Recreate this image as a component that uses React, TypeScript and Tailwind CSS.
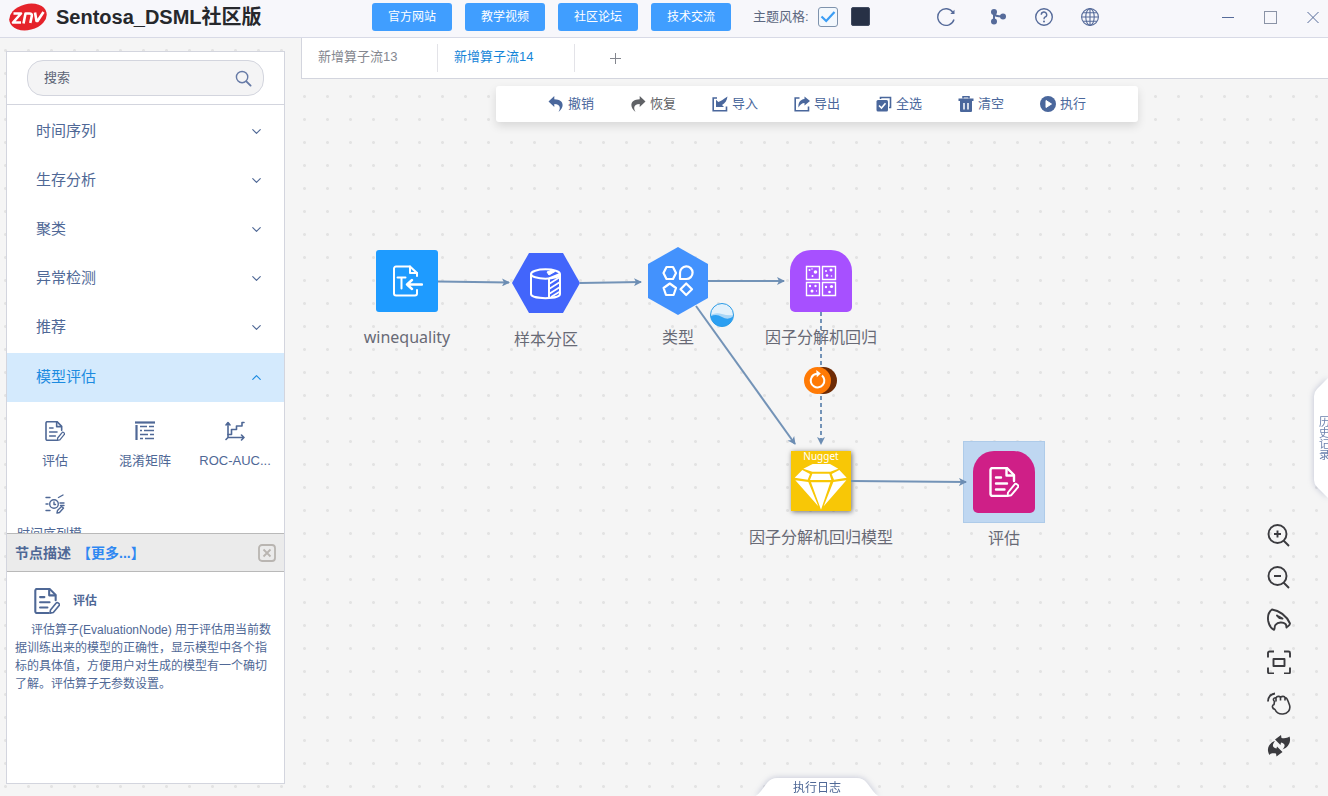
import React, { useState } from "react";
import { ChevronDown, ChevronUp } from "lucide-react";

type IconProps = { className?: string };

const EvaluateIcon = ({ className }: IconProps) => (
  <svg viewBox="0 0 30 30" fill="none" stroke="currentColor" strokeWidth="2.400" strokeLinecap="round" strokeLinejoin="round" className={className} aria-hidden="true">
    <path d="M17 29H3.500A2 2 0 0 1 1.500 27V3A2 2 0 0 1 3.500 1H18L25 8V14" />
    <path d="M17.500 1.500V8.500H24.500" />
    <path d="M7 10.500H12M7 16.500H18M7 22.500H15.500" />
    <path d="M19 25.500L25.600 17.400A1.500 1.500 0 0 1 27.800 17.200L28.800 18A1.500 1.500 0 0 1 29 20.200L22.300 28.200L18.500 29Z" strokeWidth="1.900" />
  </svg>
);

const MatrixIcon = ({ className }: IconProps) => (
  <svg viewBox="0 0 20 20" fill="none" stroke="currentColor" strokeWidth="1.4" className={className} aria-hidden="true">
    <path d="M0 1.500H20" strokeWidth="2.200" />
    <path d="M1.500 4V19" strokeWidth="2.200" />
    <path d="M5 5.500H12M14 5.500H19M5 9.500H7M9 9.500H19M5 13.500H13M15 13.500H19M5 17.500H8M10 17.500H19" />
  </svg>
);

const RocIcon = ({ className }: IconProps) => (
  <svg viewBox="0 0 20 20" fill="none" stroke="currentColor" strokeWidth="1.600" strokeLinecap="round" strokeLinejoin="round" className={className} aria-hidden="true">
    <path d="M3 2V16.500H19M1 4L3 1.500L5 4M16.500 14L19 16.500L16.500 19M3 16.500L1 18.500" />
    <path d="M3 13.500H6.500V8.500H11.500V5H17V1.500H19" />
  </svg>
);

const TimeSeriesIcon = ({ className }: IconProps) => (
  <svg viewBox="0 0 20 20" fill="none" stroke="currentColor" strokeWidth="1.400" strokeLinecap="round" strokeLinejoin="round" className={className} aria-hidden="true">
    <circle cx="9" cy="10" r="4.300" />
    <path d="M9 8V10.500H10.500M1 3.500H5M13.500 3.500L18 1M1 10H3M15 9H19M15.500 11.500H19M1 16.500H5" />
    <path d="M12.500 16.500L16.500 12.500L18.500 14L14.500 18.500L12 19Z" />
  </svg>
);

const SearchIcon = ({ className }: IconProps) => (
  <svg viewBox="0 0 18 18" fill="none" stroke="currentColor" strokeWidth="1.500" strokeLinecap="round" className={className} aria-hidden="true">
    <circle cx="7.500" cy="7.500" r="6" />
    <path d="M12 12L16.500 16.500" strokeWidth="2" />
  </svg>
);

const UndoIcon = ({ className }: IconProps) => (
  <svg viewBox="0 0 16 16" fill="currentColor" className={className} aria-hidden="true">
    <path d="M6.300 0L0.500 5.600L6.300 11V8C11 8 13.500 10.500 10.500 16C17 11 16 3.300 6.300 3.200Z" />
  </svg>
);

const RedoIcon = ({ className }: IconProps) => (
  <svg viewBox="0 0 16 16" fill="currentColor" className={className} aria-hidden="true">
    <path d="M9.700 0L15.500 5.600L9.700 11V8C5 8 2.500 10.500 5.500 16C-1 11 0 3.300 9.700 3.200Z" />
  </svg>
);

const ImportIcon = ({ className }: IconProps) => (
  <svg viewBox="0 0 16 16" className={className} aria-hidden="true">
    <path d="M5 2H1.200V14.800H14.500V10.500" fill="none" stroke="currentColor" strokeWidth="1.600" />
    <path d="M4 11V3.800L6.300 6C8.500 5.500 11 3.500 15.500 0.500C15 4.500 13 7.500 10 9L12 11Z" fill="currentColor" />
  </svg>
);

const ExportIcon = ({ className }: IconProps) => (
  <svg viewBox="0 0 16 16" className={className} aria-hidden="true">
    <path d="M5.500 2H1.200V14.800H14.500V10.500" fill="none" stroke="currentColor" strokeWidth="1.600" />
    <path d="M10.500 0.500L16 5L10.500 9.500V7C8 7 6 8.500 4.500 11.500C4 7 6 3.500 10.500 3Z" fill="currentColor" />
  </svg>
);

const SelectAllIcon = ({ className }: IconProps) => (
  <svg viewBox="0 0 16 16" className={className} aria-hidden="true">
    <path d="M4.500 3V1.500H14.500V11.500H13" fill="none" stroke="currentColor" strokeWidth="1.600" />
    <rect x="0.500" y="4" width="11.500" height="11.500" rx="1.500" fill="currentColor" />
    <path d="M3 9.500L5.500 12L9.500 7.300" fill="none" stroke="white" strokeWidth="1.600" />
  </svg>
);

const TrashIcon = ({ className }: IconProps) => (
  <svg viewBox="0 0 16 16" className={className} aria-hidden="true">
    <path d="M5 2.500V0.800H11V2.500" fill="none" stroke="currentColor" strokeWidth="1.500" />
    <path d="M0.500 2.500H15.500V5H0.500ZM2 5H14V14.500A1.300 1.300 0 0 1 12.700 16H3.300A1.300 1.300 0 0 1 2 14.500Z" fill="currentColor" />
    <path d="M6 7V13.500M10 7V13.500" stroke="white" strokeWidth="1.500" />
  </svg>
);

const RunIcon = ({ className }: IconProps) => (
  <svg viewBox="0 0 16 16" className={className} aria-hidden="true">
    <circle cx="8" cy="8" r="8" fill="currentColor" />
    <path d="M6 4.500L11.500 8L6 11.500Z" fill="white" stroke="white" strokeLinejoin="round" />
  </svg>
);

const RefreshIcon = ({ className }: IconProps) => (
  <svg viewBox="0 0 20 20" fill="none" stroke="currentColor" strokeWidth="1.400" className={className} aria-hidden="true">
    <path d="M18 12.500A8.300 8.300 0 1 1 17 5.500" />
    <path d="M18.500 2.800V7H14.300Z" fill="currentColor" stroke="none" />
  </svg>
);

const BranchIcon = ({ className }: IconProps) => (
  <svg viewBox="0 0 20 20" className={className} aria-hidden="true">
    <path d="M6 5V14.500M6 5C6 9 9 9.500 15 9.500" fill="none" stroke="currentColor" strokeWidth="2" />
    <g fill="currentColor">
      <circle cx="6" cy="5" r="3" />
      <circle cx="6" cy="14.500" r="3" />
      <circle cx="15" cy="9.500" r="3" />
    </g>
  </svg>
);

const HelpIcon = ({ className }: IconProps) => (
  <svg viewBox="0 0 20 20" fill="none" stroke="currentColor" strokeWidth="1.400" className={className} aria-hidden="true">
    <circle cx="10" cy="10" r="8.300" />
    <path d="M7.300 7.800A2.700 2.700 0 1 1 10.900 10.200Q10 10.700 10 12.200" />
    <circle cx="10" cy="14.500" r="1" fill="currentColor" stroke="none" />
  </svg>
);

const GlobeIcon = ({ className }: IconProps) => (
  <svg viewBox="0 0 20 20" fill="none" stroke="currentColor" strokeWidth="1.100" className={className} aria-hidden="true">
    <circle cx="10" cy="10" r="8.400" />
    <ellipse cx="10" cy="10" rx="4.200" ry="8.400" />
    <path d="M10 1.600V18.400M1.600 10H18.400M3 5.800H17M3 14.200H17" />
  </svg>
);

const headerLinks = ["官方网站", "教学视频", "社区论坛", "技术交流"];
const categories = ["时间序列", "生存分析", "聚类", "异常检测", "推荐", "模型评估"];

const operators = [
  { label: "评估", Icon: EvaluateIcon },
  { label: "混淆矩阵", Icon: MatrixIcon },
  { label: "ROC-AUC...", Icon: RocIcon },
  { label: "时间序列模...", Icon: TimeSeriesIcon },
];

const tools = [
  { label: "撤销", Icon: UndoIcon, tone: "text-[#4a679c]" },
  { label: "恢复", Icon: RedoIcon, tone: "text-[#606266]" },
  { label: "导入", Icon: ImportIcon, tone: "text-[#4a679c]" },
  { label: "导出", Icon: ExportIcon, tone: "text-[#4a679c]" },
  { label: "全选", Icon: SelectAllIcon, tone: "text-[#4a679c]" },
  { label: "清空", Icon: TrashIcon, tone: "text-[#4a679c]" },
  { label: "执行", Icon: RunIcon, tone: "text-[#4a679c]" },
];

function Header() {
  const [light, setLight] = useState(true);
  return (
    <header className="flex h-[38px] shrink-0 items-center border-b border-[#d8dae6] bg-[#f7f7fb] pb-1 text-[#566b9a]">
      <div className="flex w-[372px] shrink-0 items-center gap-[9px] pl-[9px]">
        <svg viewBox="0 0 38 30" className="h-[30px] w-[38px]" role="img" aria-label="znv">
          <ellipse cx="19" cy="15" rx="19" ry="13" transform="rotate(-14 19 15)" fill="#e5232b" />
          <g fill="none" stroke="white" strokeWidth="2.600" strokeLinejoin="round">
            <path d="M4.500 11.500H12L4 20.500H12" />
            <path d="M14.500 21.500L16.500 11.500H20.500Q23.300 11.500 22.800 14L21.300 21" />
            <path d="M26 10.500L27.500 19H28.500L34.500 10" />
          </g>
        </svg>
        <h1 className="text-xl font-bold whitespace-nowrap text-[#26282c]">Sentosa_DSML社区版</h1>
      </div>
      <nav className="flex shrink-0 gap-[13px]">
        {headerLinks.map((label) => (
          <a key={label} href="#" className="flex h-7 w-20 items-center justify-center rounded-[3px] bg-[#409eff] text-xs text-white">
            {label}
          </a>
        ))}
      </nav>
      <div className="ml-[22px] flex shrink-0 items-center text-[13px]">
        <label htmlFor="theme-light" className="text-[#5d6880]">主题风格:</label>
        <span className="relative ml-[9px] flex">
          <input
            id="theme-light"
            type="checkbox"
            checked={light}
            onChange={(e) => setLight(e.target.checked)}
            className="size-5 appearance-none rounded-[3px] border border-[#7f93ad] bg-[#f3f8fd]"
          />
          {light && (
            <svg viewBox="0 0 20 20" className="pointer-events-none absolute inset-0 size-5" aria-hidden="true">
              <path d="M3.500 9.500L8.200 14L16.500 5" fill="none" stroke="#3a9df5" strokeWidth="2.200" />
            </svg>
          )}
        </span>
        <button type="button" aria-label="深色" className="ml-[13px] size-[19px] rounded-[2px] border border-[#414b60] bg-[#273146]" />
      </div>
      <div className="ml-auto flex shrink-0 items-center gap-[26px]">
        <button type="button" aria-label="刷新" className="mr-1.5"><RefreshIcon className="size-5" /></button>
        <button type="button" aria-label="分支"><BranchIcon className="size-5" /></button>
        <button type="button" aria-label="帮助"><HelpIcon className="size-5" /></button>
        <button type="button" aria-label="语言"><GlobeIcon className="size-5" /></button>
      </div>
      <div className="ml-[120px] flex shrink-0 items-center gap-[27px] pr-1.5">
        <button type="button" aria-label="最小化">
          <svg viewBox="0 0 16 16" className="size-4" fill="none" stroke="currentColor"><path d="M2 8.500H14" /></svg>
        </button>
        <button type="button" aria-label="最大化">
          <svg viewBox="0 0 16 16" className="size-4" fill="none" stroke="#8a93a6"><rect x="1.500" y="2.500" width="12" height="12" /></svg>
        </button>
        <button type="button" aria-label="关闭">
          <svg viewBox="0 0 16 16" className="size-4" fill="none" stroke="currentColor"><path d="M1.500 3L12.500 14M12.500 3L1.500 14" /></svg>
        </button>
      </div>
    </header>
  );
}

function Sidebar() {
  return (
    <aside className="mt-[13px] mb-3 ml-1.5 flex w-[279px] shrink-0 flex-col border border-[#d3d5de] bg-white text-[#4f6896]">
      <div className="border-b border-[#d3d5de] px-5 py-2">
        <div className="flex h-9 items-center rounded-2xl border border-[#d3d5de] bg-[#f4f4f5] pr-[11px] pl-4">
          <input
            type="text"
            aria-label="搜索"
            placeholder="搜索"
            className="min-w-0 flex-1 bg-transparent text-[13px] outline-none placeholder:text-[#5c6475]"
          />
          <SearchIcon className="size-[17px] text-[#667aa6]" />
        </div>
      </div>
      <div className="min-h-0 flex-1 overflow-hidden pt-[3px]">
        {categories.map((name) => {
          const open = name === "模型评估";
          const Chevron = open ? ChevronUp : ChevronDown;
          return (
            <button
              key={name}
              type="button"
              aria-expanded={open}
              className={
                open
                  ? "flex h-[49px] w-full items-center justify-between bg-[#d4eafd] pr-5 pl-[29px] text-[15px] text-[#1c8be0]"
                  : "flex h-[49px] w-full items-center justify-between pr-5 pb-[3px] pl-[29px] text-[15px]"
              }
            >
              {name}
              <Chevron className="size-[15px]" strokeWidth={1.8} />
            </button>
          );
        })}
        <div className="grid grid-cols-3 gap-y-[15px] pt-[19px] pr-1 pl-[3px]">
          {operators.map(({ label, Icon }) => (
            <button key={label} type="button" className="flex flex-col items-center gap-2.5 text-[13px] leading-[20px] whitespace-nowrap">
              <Icon className="h-5 w-5" />
              <span className="h-7">{label}</span>
            </button>
          ))}
        </div>
      </div>
      <section className="h-[250px] shrink-0">
        <div className="flex h-[39px] items-center gap-1.5 border-y border-[#b9b9b9] bg-[#ebebeb] px-2 text-sm font-bold">
          <h2>节点描述</h2>
          <a href="#" className="text-[#2f88f2]">【更多...】</a>
          <button type="button" aria-label="关闭描述" className="ml-auto">
            <svg viewBox="0 0 18 18" className="size-[18px]" fill="none" stroke="#b9b5b1" strokeWidth="1.800">
              <rect x="1" y="1" width="16" height="16" rx="3" />
              <path d="M5.500 5.500L12.500 12.500M12.500 5.500L5.500 12.500" />
            </svg>
          </button>
        </div>
        <div className="px-2 pt-4 text-xs leading-[18px]">
          <div className="flex items-center gap-[13px] pl-[19px]">
            <EvaluateIcon className="size-[26px]" />
            <h3 className="font-bold">评估</h3>
          </div>
          <p className="mt-[7px] indent-4">
            评估算子(EvaluationNode) 用于评估用当前数据训练出来的模型的正确性，显示模型中各个指标的具体值，方便用户对生成的模型有一个确切了解。评估算子无参数设置。
          </p>
        </div>
      </section>
    </aside>
  );
}

function Tabs() {
  return (
    <div className="flex h-[41px] shrink-0 items-center border-b border-l border-[#d3d5de] bg-white text-[13px]">
      <button type="button" className="h-7 w-[136px] border-r border-[#e3e3e8] pb-0.5 pl-4 text-left text-[#84878f]">新增算子流13</button>
      <button type="button" className="h-7 w-[137px] border-r border-[#e3e3e8] pb-0.5 pl-4 text-left text-[#1585d8]">新增算子流14</button>
      <button type="button" aria-label="新增标签" className="ml-[35px] text-[#83868e]">
        <svg viewBox="0 0 11 11" className="size-[11px]" stroke="currentColor"><path d="M5.500 0V11M0 5.500H11" /></svg>
      </button>
    </div>
  );
}

function Toolbar() {
  return (
    <div className="relative z-10 mx-auto mt-[7px] flex h-9 w-[642px] items-center justify-center gap-9 rounded-[3px] bg-white pb-px text-[13px] shadow-[0_4px_10px_rgba(0,0,0,0.12)]">
      {tools.map(({ label, Icon, tone }) => (
        <button key={label} type="button" className={tone + " flex items-center gap-1 whitespace-nowrap"}>
          <Icon className="size-4" />
          {label}
        </button>
      ))}
    </div>
  );
}

function Node({ place, label, children }: { place: string; label: string; children: React.ReactNode }) {
  return (
    <div className={place + " absolute flex w-[160px] flex-col items-center gap-[3px] text-base text-[#686a75]"}>
      <div className="flex size-[82px] items-center justify-center">{children}</div>
      <span className="whitespace-nowrap">{label}</span>
    </div>
  );
}

function Flow() {
  return (
    <div className="absolute inset-0 overflow-hidden">
      <Node place="left-[26px] top-[161px]" label="winequality">
        <div className="flex size-[62px] items-center justify-center rounded-[3px] bg-[#1e9bff]">
          <svg viewBox="0 0 32 32" className="size-8" fill="none" stroke="white" strokeWidth="2" strokeLinecap="round" strokeLinejoin="round">
            <path d="M26 11V8L19 1.500H5A2 2 0 0 0 3 3.500V28.500A2 2 0 0 0 5 30.500H24A2 2 0 0 0 26 28.500V25" />
            <path d="M19 1.500V8H26" />
            <path d="M6.500 12.500H14.500M10.500 12.500V23.500" />
            <path d="M31 19.500H16M21 15L16 19.500L21 24" strokeWidth="2.400" />
          </svg>
        </div>
      </Node>
      <Node place="left-[165px] top-[163px]" label="样本分区">
        <svg viewBox="0 0 68 60" className="h-[60px] w-[68px]">
          <path d="M17 0H51L68 30L51 60H17L0 30Z" fill="#4265fb" />
          <g fill="none" stroke="white" strokeWidth="2">
            <ellipse cx="33.500" cy="21" rx="14.500" ry="4.700" />
            <path d="M19 21V41C19 46.500 48 46.500 48 41V21" />
            <path d="M37 25.500V45M37 25.500L48 21" />
            <path d="M37 31L48 24M37 36L48 29M37 41L48 34M39 44L48 38.500" strokeWidth="1.700" />
            <path d="M35 19L40 17L43 18.500L37 22Z" fill="white" strokeWidth="1" />
          </g>
        </svg>
      </Node>
      <Node place="left-[297px] top-[161px]" label="类型">
        <svg viewBox="0 0 60 68" className="h-[68px] w-[60px]">
          <path d="M30 0L60 17V51L30 68L0 51V17Z" fill="#4392fd" />
          <g fill="none" stroke="white" strokeWidth="2.200" strokeLinejoin="round">
            <path d="M18.500 20H25L28 26L25 32H18.500L15.500 26Z" />
            <path d="M32 32V26A6.300 6.300 0 1 1 38.300 32Z" />
            <path d="M21.800 36.500L28 41L25.600 48H18L15.600 41Z" />
            <path d="M38.200 36.500L44 42.300L38.200 48L32.500 42.300Z" />
          </g>
        </svg>
      </Node>
      <Node place="left-[440px] top-[161px]" label="因子分解机回归">
        <div className="flex size-[62px] items-center justify-center rounded-t-[21px] rounded-b-[5px] bg-[#a750ff]">
          <svg viewBox="0 0 32 32" className="size-8" fill="none" stroke="white" strokeWidth="1.400">
            <path d="M1.500 1.500H14.500V14.500H1.500ZM17.500 1.500H30.500V14.500H17.500ZM1.500 17.500H14.500V30.500H1.500ZM17.500 17.500H30.500V30.500H17.500Z" />
            <g fill="white" stroke="none">
              <circle cx="4.500" cy="5" r="1" /><circle cx="10.500" cy="7" r="1.800" /><circle cx="7.500" cy="11" r="1" /><circle cx="7" cy="4" r="0.700" />
              <circle cx="21" cy="6" r="1" /><circle cx="26" cy="5" r="1.500" /><circle cx="22" cy="10.500" r="1.300" /><circle cx="26.500" cy="11" r="0.800" />
              <circle cx="5" cy="21" r="1.200" /><circle cx="10.500" cy="21" r="1.200" /><circle cx="7" cy="26" r="1.500" /><circle cx="11.500" cy="26" r="0.700" />
              <circle cx="21" cy="22" r="1.200" /><circle cx="26.500" cy="21.500" r="1.600" /><circle cx="24.500" cy="27" r="1.300" />
            </g>
          </svg>
        </div>
      </Node>
      <Node place="left-[440px] top-[361px]" label="因子分解机回归模型">
        <div className="relative flex size-[60px] justify-center bg-[#f8c706] shadow-[1px_1px_5px_rgba(0,0,0,0.55)]">
          <span className="text-[10px] leading-[11px] text-white">Nugget</span>
          <svg viewBox="0 0 180 180" className="absolute inset-0 size-full" fill="white">
            <path d="M65 39H117L142 53L118 62H64L37 53Z" />
            <path d="M34 57L57 69L50 86L11 80ZM64 68H115L121 87H57ZM145 57L167 80L129 86L122 69Z" />
            <path d="M13 88L52 93L82 166ZM60 94H118L90 176ZM127 93L166 88L98 166Z" />
          </svg>
        </div>
      </Node>
      <Node place="left-[623px] top-[362px]" label="评估">
        <div className="flex size-[82px] items-center justify-center border border-[#aecbe9] bg-[#bfd7f1]">
          <div className="flex size-[62px] items-center justify-center rounded-t-[21px] rounded-b-[5px] bg-[#cf1f87] text-white">
            <EvaluateIcon className="size-[30px]" />
          </div>
        </div>
      </Node>
      <svg className="pointer-events-none absolute inset-0 size-full" aria-hidden="true">
        <defs>
          <marker id="tip" viewBox="0 0 8 8" refX="7" refY="4" markerWidth="8" markerHeight="8" markerUnits="userSpaceOnUse" orient="auto">
            <path d="M0 0L8 4L0 8L2 4Z" fill="#6c8db3" />
          </marker>
        </defs>
        <g transform="translate(-301 -79)" fill="none" stroke="#7393b7" strokeWidth="2">
          <path d="M438 281.500L509 282.500" markerEnd="url(#tip)" />
          <path d="M580 283L641 282" markerEnd="url(#tip)" />
          <path d="M708 281H784" markerEnd="url(#tip)" />
          <path d="M696 306L795 444" markerEnd="url(#tip)" />
          <path d="M821 312V444" strokeDasharray="4 3" markerEnd="url(#tip)" />
          <path d="M851 481L966 482" markerEnd="url(#tip)" />
        </g>
        <g transform="translate(-301 -79)">
          <circle cx="722" cy="315" r="11.500" fill="#e3f1fb" />
          <path d="M710.500 315Q716 312 722 314T733.500 315A11.500 11.500 0 0 1 710.500 315Z" fill="#a9d6f7" />
          <path d="M710.500 316.500Q716 313.500 722 317T733.300 316.500A11.500 11.500 0 0 1 710.500 316.500Z" fill="#2b9ff2" />
          <circle cx="722" cy="315" r="11.500" fill="none" stroke="#2b9be6" />
          <circle cx="823.500" cy="380.500" r="13.500" fill="#6e2b05" />
          <circle cx="817.500" cy="380.500" r="13.500" fill="#ff7a05" />
          <path d="M822 375.500A6.800 6.800 0 1 1 811.500 377.500Q813 374.200 817 373.800" fill="none" stroke="white" strokeWidth="2" />
          <path d="M816.300 370L820.800 373.500L816.800 377.300Z" fill="white" />
        </g>
      </svg>
    </div>
  );
}

const viewTools = [
  {
    label: "放大",
    art: <><circle cx="10.500" cy="10" r="9" /><path d="M16.500 16.500L22 22M10.500 6.500V13.500M7 10H14" /></>,
  },
  {
    label: "缩小",
    art: <><circle cx="10.500" cy="10" r="9" /><path d="M16.500 16.500L22 22M7 10H14" /></>,
  },
  {
    label: "鹰眼",
    art: <><path d="M5 1.500C1.500 4 0.500 8.500 1.200 13C2 17 4 20.500 7 21.800C8.300 20.500 7 18.500 8.500 16.800C11 14 16 13.800 18.500 16C19.500 17 19.300 18.500 19.500 19.500C21 18 23 17.500 23 15.500C19.500 7.500 12 2.500 5 1.500Z" /><path d="M10 7.500L15.500 10.500L12.500 10Z" /></>,
  },
  {
    label: "适应画布",
    art: <path d="M1 7.500V3A1.500 1.500 0 0 1 2.500 1.500H7M17 1.500H21.500A1.500 1.500 0 0 1 23 3V7.500M23 17.500V22A1.500 1.500 0 0 1 21.500 23.500H17M7 23.500H2.500A1.500 1.500 0 0 1 1 22V17.500M6.500 9H17.500V16H6.500Z" />,
  },
  {
    label: "拖动",
    art: <><path d="M1 9.500C1 5 4 2 8 1.500" /><path d="M7.500 9.500C5.500 7.500 6.500 5.500 9 5.800C10 4 12.500 4 13.500 5.300C15 4 17.500 4 18 5.500C19.800 5.500 20.300 7 21 9L22.500 13C24 18 20.500 21.500 16 22C12 22.300 9.500 21 8 17.500C5 16.500 4.500 13.500 7 12.500Z M9 6V9.500M13.500 5.500V8.500M18 5.500V8.500" strokeWidth="1.600" /></>,
  },
  {
    label: "重置",
    art: <g fill="currentColor" stroke="none"><path d="M8 5.500L14 1L14.500 4C18 4.500 20.500 4 22.500 2.500C24.500 8 21 13.500 15.500 15.500C18.500 12 18.500 9.500 14 8.500L13.500 11Z" /><path d="M15.500 18L9.500 22.500L9 19.500C5.500 19 4 19 2.500 21C-1 15.500 1.500 9 8 7C5 11 5 13.500 9.500 14.500L10 12.500Z" /></g>,
  },
];

export default function App() {
  return (
    <div className="flex h-screen min-h-[640px] flex-col bg-[#f5f5f5] bg-[radial-gradient(circle,#e3e3e3_1px,transparent_2px)] bg-[size:23px_23px] bg-[position:-6px_-7px] font-['Liberation_Sans','Noto_Sans_CJK_SC',sans-serif]">
      <Header />
      <div className="flex min-h-0 flex-1">
        <Sidebar />
        <main className="ml-4 flex min-w-0 flex-1 flex-col">
          <Tabs />
          <div className="relative flex min-h-0 flex-1 flex-col overflow-hidden pl-[5px] font-['Noto_Sans','Noto_Sans_CJK_SC',sans-serif]">
            <Flow />
            <Toolbar />
            <div className="absolute right-[37px] bottom-[38px] flex flex-col gap-[18px] text-[#3b3b3f]">
              {viewTools.map(({ label, art }) => (
                <button key={label} type="button" aria-label={label}>
                  <svg viewBox="0 0 24 24" className="size-6" fill="none" stroke="currentColor" strokeWidth="1.900" strokeLinejoin="round">
                    {art}
                  </svg>
                </button>
              ))}
            </div>
            <div className="absolute top-[299px] right-0 [filter:drop-shadow(0_0_3px_rgba(90,100,150,0.35))]">
              <button type="button" className="flex h-[120px] w-[14px] flex-col items-start justify-center overflow-hidden bg-white pl-[5px] text-[11px] leading-[11px] text-[#6b80ad] [clip-path:path('M14_0L3_11Q0_14_0_18V102Q0_106_3_109L14_120Z')]">
                <span>历</span><span>史</span><span>记</span><span>录</span>
              </button>
            </div>
            <div className="relative z-10 mx-auto mt-auto [filter:drop-shadow(0_0_3px_rgba(90,100,150,0.35))]">
              <button type="button" className="block h-[18px] w-[126px] bg-white text-xs leading-[20px] text-[#4f6896] [clip-path:path('M0_19Q4_17_7_13L13_5Q17_0_23_0H103Q109_0_113_5L119_13Q122_17_126_19Z')]">
                执行日志
              </button>
            </div>
          </div>
        </main>
      </div>
    </div>
  );
}
